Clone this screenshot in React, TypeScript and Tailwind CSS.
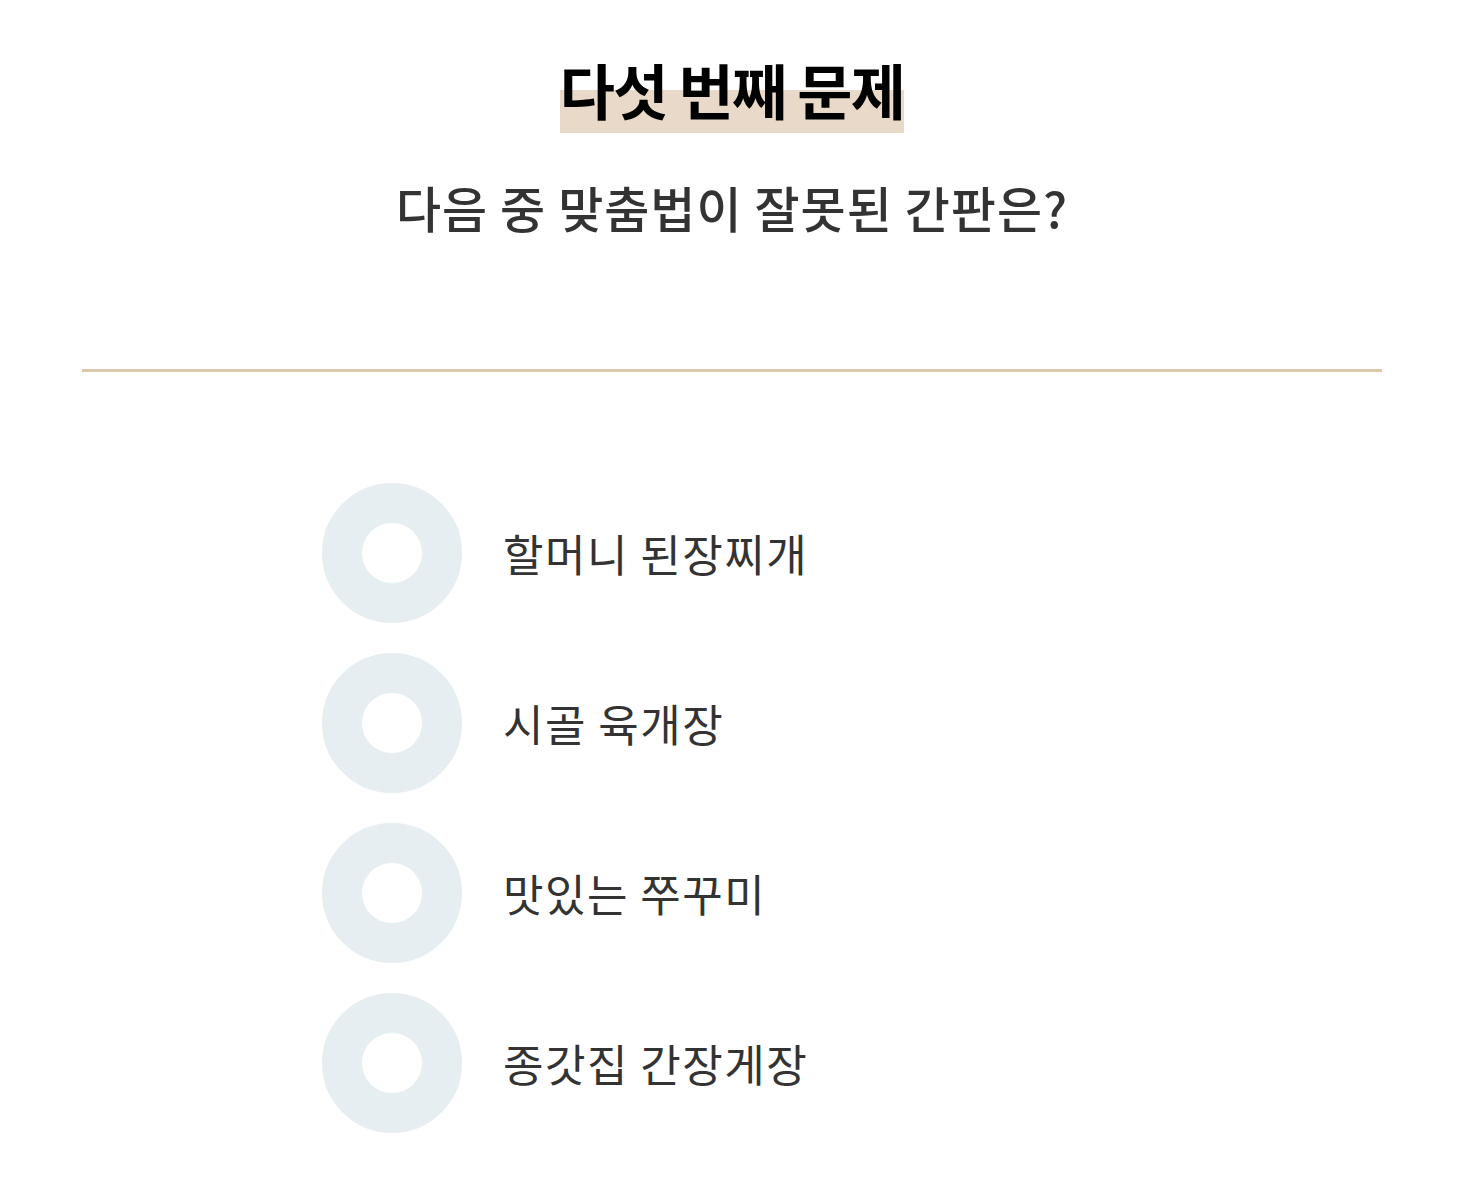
const options = ["할머니 된장찌개", "시골 육개장", "맛있는 쭈꾸미", "종갓집 간장게장"]

export default function App() {
  return (
    <div
      className="w-[1464px] bg-white pb-[40px]"
      style={{ fontFamily: '"Noto Sans CJK KR", "Noto Sans", sans-serif' }}
    >
      <div className="mx-auto w-[1300px]">
        <div className="flex flex-col items-center pt-[49px]">
          <h2 className="relative text-[60px] font-bold leading-[80px] tracking-[-1.75px] text-black">
            <span className="absolute left-0 right-0 top-[41px] h-[43px] bg-[#e8d9c8]" />
            <span className="relative">다섯 번째 문제</span>
          </h2>
          <p className="mt-[48px] text-[49px] font-medium leading-[60px] tracking-[1px] text-[#333]">
            다음 중 맞춤법이 잘못된 간판은?
          </p>
        </div>

        <div className="mt-[132px] h-[3px] bg-[#dec8ac]" />

        <ul className="mt-[111px] flex flex-col gap-[30px] pl-[240px]">
          {options.map((text) => (
            <li key={text} className="flex items-center gap-[41px]">
              <span className="box-border h-[140px] w-[140px] rounded-full border-[40px] border-[#e7eef1]" />
              <span className="text-[44px] leading-[56px] tracking-[1.5px] text-[#333]">{text}</span>
            </li>
          ))}
        </ul>
      </div>
    </div>
  )
}
